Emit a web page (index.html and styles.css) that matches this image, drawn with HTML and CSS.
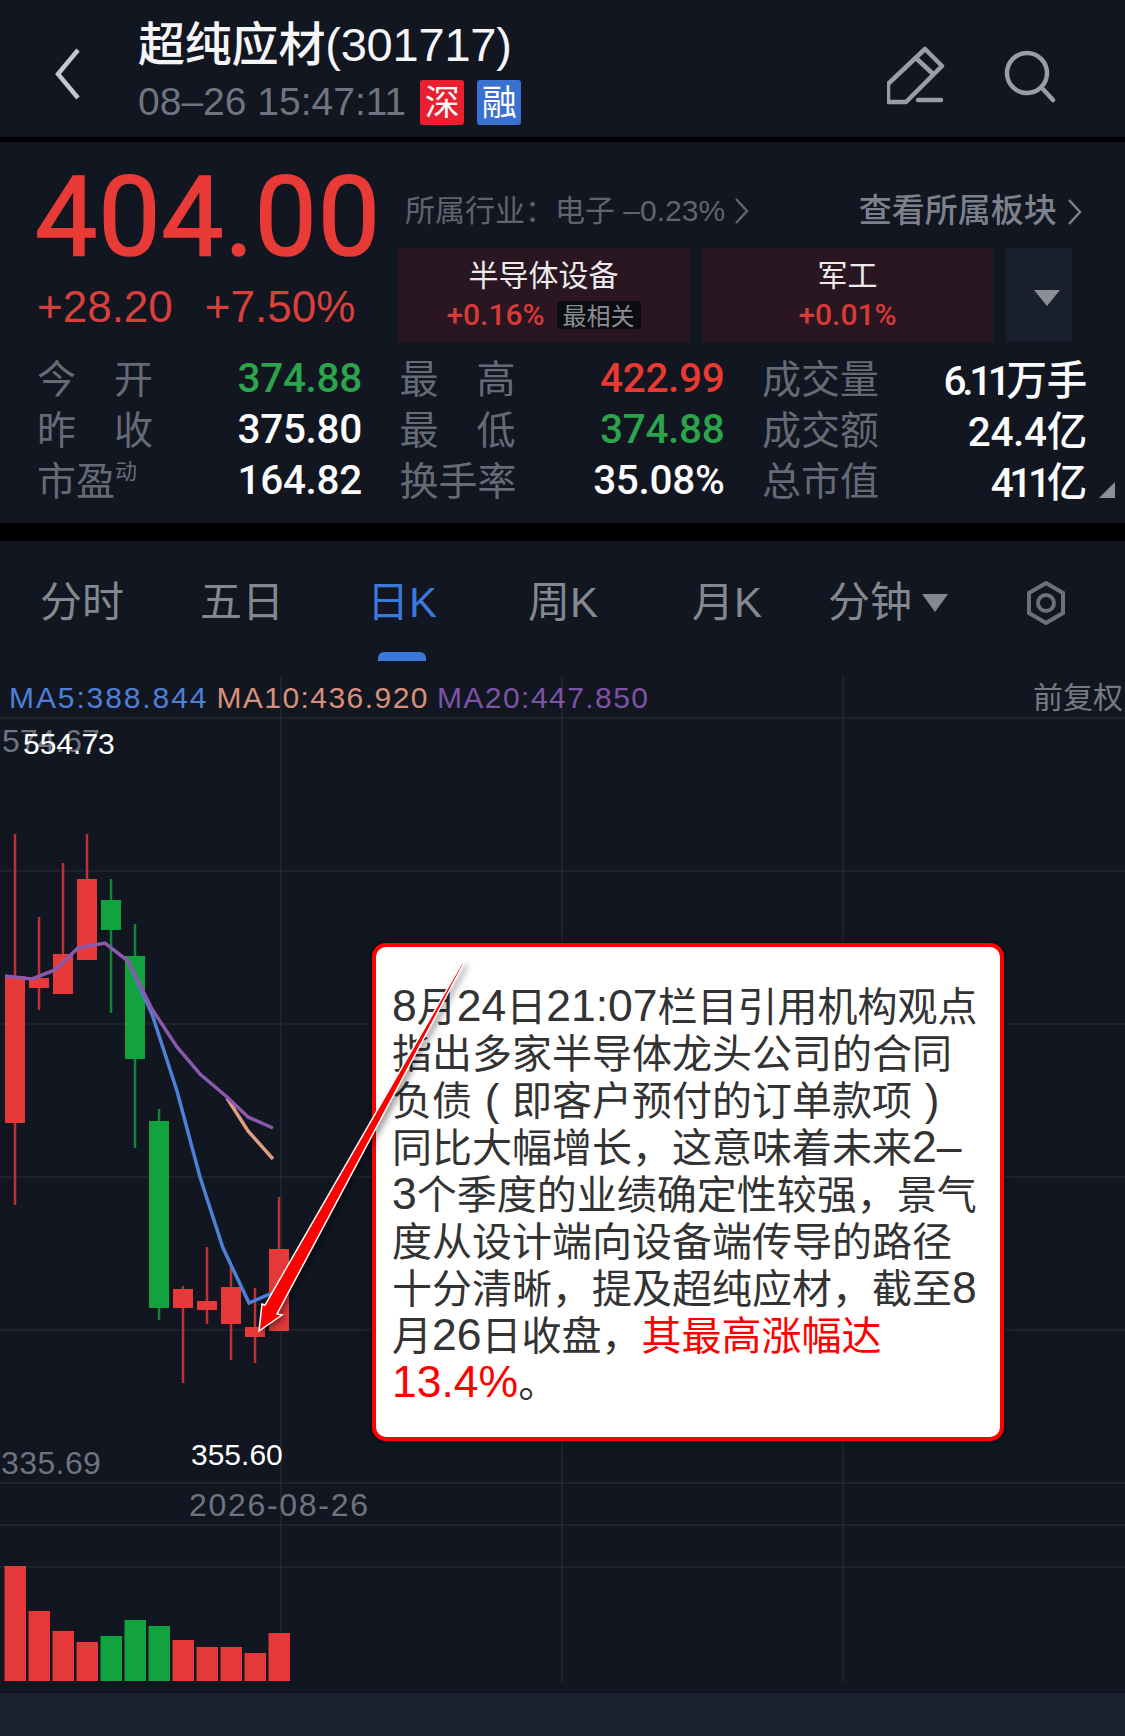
FILE: index.html
```html
<!DOCTYPE html>
<html lang="zh-CN">

<head>
    <meta charset="UTF-8">
    <title>超纯应材(301717)</title>
    <link rel="stylesheet" href="styles.css">
</head>

<body>
    <div class="page">

        <!-- top bar -->
        <header class="topbar">
            <svg class="back" width="30" height="54" viewBox="0 0 30 54">
                <path d="M25 3 L5 27 L25 51" />
            </svg>
            <div class="title-block">
                <div class="stock-name">超纯应材(301717)</div>
                <div class="stock-sub">
                    <span class="stock-time">08–26 15:47:11</span>
                    <span class="badge badge-red">深</span>
                    <span class="badge badge-blue">融</span>
                </div>
            </div>
            <svg class="top-icons" width="170" height="60" viewBox="0 0 170 60">
                <path d="M38 3 L55 20 L19 56 L1 56 L1 38 Z M30 13 L45 27" />
                <path d="M31 54 L54 54" />
                <circle cx="140" cy="27" r="20" />
                <path d="M155 42 L166 54" />
            </svg>
        </header>

        <!-- quote panel -->
        <section class="quote">
            <div class="quote-top">
                <div class="price-col">
                    <div class="price">404.00</div>
                    <div class="change">
                        <span>+28.20</span>
                        <span>+7.50%</span>
                    </div>
                </div>
                <div class="sector-col">
                    <div class="sector-line">
                        <span class="industry">所属行业：电子 –0.23%
                            <svg class="chev" width="16" height="28" viewBox="0 0 16 28"><path d="M3 2 L14 14 L3 26" /></svg>
                        </span>
                        <span class="see-all">查看所属板块
                            <svg class="chev" width="16" height="28" viewBox="0 0 16 28"><path d="M3 2 L14 14 L3 26" /></svg>
                        </span>
                    </div>
                    <div class="sector-cards">
                        <div class="sector-card">
                            <div class="sector-name">半导体设备</div>
                            <div class="sector-pct">+0.16%<span class="tag">最相关</span></div>
                        </div>
                        <div class="sector-card">
                            <div class="sector-name">军工</div>
                            <div class="sector-pct">+0.01%</div>
                        </div>
                        <div class="sector-more"><span class="tri-down"></span></div>
                    </div>
                </div>
            </div>

            <div class="stats">
                <div class="stat"><span class="label spread"><i>今</i><i>开</i></span><span class="val green">374.88</span></div>
                <div class="stat"><span class="label spread"><i>最</i><i>高</i></span><span class="val red">422.99</span></div>
                <div class="stat"><span class="label">成交量</span><span class="val"><span class="tight">6.11</span>万手</span></div>

                <div class="stat"><span class="label spread"><i>昨</i><i>收</i></span><span class="val">375.80</span></div>
                <div class="stat"><span class="label spread"><i>最</i><i>低</i></span><span class="val green">374.88</span></div>
                <div class="stat"><span class="label">成交额</span><span class="val">24.4亿</span></div>

                <div class="stat"><span class="label">市盈<sup>动</sup></span><span class="val">164.82</span></div>
                <div class="stat"><span class="label">换手率</span><span class="val">35.08%</span></div>
                <div class="stat"><span class="label">总市值</span><span class="val"><span class="tight">411</span>亿</span></div>
            </div>
            <span class="corner"></span>
        </section>

        <!-- period tabs -->
        <nav class="tabs">
            <span class="tab">分时</span>
            <span class="tab">五日</span>
            <span class="tab active">日K</span>
            <span class="tab">周K</span>
            <span class="tab">月K</span>
            <span class="tab">分钟<span class="tab-caret"></span></span>
            <svg class="tab-gear" width="40" height="44" viewBox="0 0 40 44">
                <path d="M20 2 L37 12 L37 32 L20 42 L3 32 L3 12 Z" />
                <circle cx="20" cy="22" r="8" />
            </svg>
        </nav>

        <!-- k line chart -->
        <section class="chart">
            <svg class="chart-svg" id="chart" width="1125" height="1016" viewBox="0 677 1125 1016"></svg>

            <div class="ma-row">
                <span class="ma5">MA5:388.844</span>
                <span class="ma10">MA10:436.920</span>
                <span class="ma20">MA20:447.850</span>
                <span class="adjust">前复权</span>
            </div>

            <div class="callout">
                <span class="num">8</span>月<span class="num">24</span>日<span class="num">21:07</span>栏目引用机构观点<br>
                指出多家半导体龙头公司的合同<br>
                负债<span class="paren">(</span>即客户预付的订单款项<span class="paren">)</span><br>
                同比大幅增长，这意味着未来<span class="num">2–</span><br>
                <span class="num">3</span>个季度的业绩确定性较强，景气<br>
                度从设计端向设备端传导的路径<br>
                十分清晰，提及超纯应材，截至<span class="num">8</span><br>
                月<span class="num">26</span>日收盘，<span class="hl">其最高涨幅达<br><span class="num">13.4%</span></span>。
            </div>

            <svg class="arrow" width="480" height="400" viewBox="0 0 480 400">
                <polygon points="464,0 277,351 282,352 259,368 262,341 265,342 462,0" />
            </svg>
        </section>

        <div class="bottom-band"></div>
    </div>

    <script>
        const svg = document.getElementById("chart");

        // x of a candle from its index
        const cx = i => 15 + i * 24;

        // [color, bodyTop, bodyBottom, wickTop, wickBottom, volumeTop]
        const candles = [
            ["r", 976, 1123, 834, 1205, 1566],
            ["r", 978, 988, 917, 1010, 1611],
            ["r", 954, 994, 863, 954, 1631],
            ["r", 879, 960, 834, 879, 1642],
            ["g", 900, 930, 879, 1013, 1636],
            ["g", 956, 1059, 924, 1148, 1620],
            ["g", 1121, 1308, 1109, 1320, 1626],
            ["r", 1289, 1308, 1286, 1383, 1640],
            ["r", 1301, 1310, 1247, 1324, 1647],
            ["r", 1287, 1324, 1267, 1360, 1647],
            ["r", 1327, 1337, 1288, 1363, 1653],
            ["r", 1249, 1331, 1197, 1249, 1633]
        ];

        const lines = {
            ma10: "227,1098 248,1131 273,1159",
            ma5: "128,961 152,1014 177,1091 200,1177 223,1248 249,1303 272,1293",
            ma20: "5,976 32,979 55,970 78,948 105,943 128,961 152,1009 177,1047 200,1074 227,1097 248,1117 273,1128"
        };

        let out = "";

        [718, 871, 1024, 1177, 1330, 1483, 1525, 1567].forEach(y => {
            out += `<line class="grid" x1="0" x2="1125" y1="${y}" y2="${y}" />`;
        });
        [281, 562, 843].forEach(x => {
            out += `<line class="grid" x1="${x}" x2="${x}" y1="677" y2="1682" />`;
        });

        candles.forEach((c, i) => {
            const cls = c[0] === "r" ? "up" : "down";
            const x = cx(i);
            out += `<rect class="${cls} wick" x="${x - 1.25}" y="${c[3]}" width="2.5" height="${c[4] - c[3]}" />`;
            out += `<rect class="${cls}" x="${x - 10}" y="${c[1]}" width="20" height="${c[2] - c[1]}" />`;
            out += `<rect class="${cls}" x="${x - 10.5}" y="${c[5]}" width="21.5" height="${1681 - c[5]}" />`;
        });

        Object.keys(lines).forEach(k => {
            out += `<polyline class="line-${k}" points="${lines[k]}" />`;
        });

        out += `<text class="lbl-gray" x="2" y="752">574.67</text>`;
        out += `<text class="lbl-white" x="23" y="754">554.73</text>`;
        out += `<text class="lbl-white" x="191" y="1465">355.60</text>`;
        out += `<text class="lbl-gray lbl-low" x="1" y="1474">335.69</text>`;
        out += `<text class="lbl-gray lbl-date" x="189" y="1516">2026-08-26</text>`;

        svg.innerHTML = out;
    </script>
</body>

</html>
```

FILE: styles.css
```css
* {
    box-sizing: border-box;
}

html,
body {
    margin: 0;
    padding: 0;
    background: #000;
}

body {
    font-family: "Liberation Sans", "Noto Sans CJK SC", sans-serif;
}

.page {
    width: 1125px;
    height: 1736px;
    display: flex;
    flex-direction: column;
    overflow: hidden;
    background: #000;
}

/* top bar */
.topbar {
    height: 137px;
    background: #111621;
    display: flex;
    align-items: flex-start;
    position: relative;
    padding-left: 53px;
    margin-bottom: 5px;
}

.back {
    margin-top: 47px;
    fill: none;
    stroke: #c4c7ce;
    stroke-width: 4.5;
}

.title-block {
    margin-left: 55px;
    padding-top: 15px;
}

.stock-name {
    color: #f5f5f6;
    font-size: 47px;
    line-height: 60px;
    font-weight: 500;
    letter-spacing: -0.2px;
    white-space: nowrap;
}

.stock-sub {
    display: flex;
    align-items: center;
    margin-top: 2px;
    height: 50px;
}

.stock-time {
    color: #6f7480;
    font-size: 39px;
    margin-right: 14px;
    white-space: nowrap;
}

.badge {
    width: 44px;
    height: 45px;
    color: #fff;
    font-size: 35px;
    line-height: 45px;
    text-align: center;
    border-radius: 3px;
    margin-right: 13px;
    margin-top: 1px;
}

.badge-red {
    background: #e9202f;
}

.badge-blue {
    background: #3a70cf;
}

.top-icons {
    margin-left: auto;
    margin-right: 68px;
    margin-top: 46px;
    fill: none;
    stroke: #9a9da8;
    stroke-width: 4.5;
    stroke-linecap: round;
    stroke-linejoin: round;
}

/* quote panel */
.quote {
    height: 381px;
    background: #111621;
    position: relative;
    margin-bottom: 18px;
    padding-top: 20px;
}

.quote-top {
    display: flex;
    height: 190px;
}

.price-col {
    width: 398px;
    padding-left: 35px;
}

.price {
    color: #e83a36;
    font-family: Roboto, "Liberation Sans", sans-serif;
    font-size: 111px;
    line-height: 110px;
    font-weight: 400;
    letter-spacing: 0.8px;
    -webkit-text-stroke: 1.5px #e83a36;
}

.change {
    color: #d9403c;
    font-size: 44px;
    line-height: 48px;
    margin-top: 11px;
    padding-left: 2px;
    display: flex;
    gap: 32px;
}

.sector-col {
    width: 675px;
}

.sector-line {
    display: flex;
    justify-content: space-between;
    height: 50px;
    align-items: center;
    padding-left: 7px;
    margin-top: 21px;
    color: #60646f;
    font-size: 30px;
    white-space: nowrap;
}

.see-all {
    color: #7d818c;
    font-size: 33px;
    font-weight: 500;
    margin-right: -9px;
}

.chev {
    fill: none;
    stroke: currentColor;
    stroke-width: 2.5;
    vertical-align: -4px;
}

.sector-cards {
    display: flex;
    gap: 13px;
    margin-top: 15px;
    height: 94px;
}

.sector-card {
    width: 291px;
    background: #291620;
    text-align: center;
}

.sector-name {
    color: #eceaea;
    font-size: 30px;
    line-height: 36px;
    margin-top: 10px;
}

.sector-pct {
    color: #d83a38;
    font-family: Roboto, sans-serif;
    font-weight: 500;
    font-size: 30px;
    line-height: 30px;
    margin-top: 6px;
    display: flex;
    justify-content: center;
    align-items: center;
}

.tag {
    display: block;
    background: #0a0c10;
    color: #8a8c93;
    font-family: "Noto Sans CJK SC", sans-serif;
    font-weight: 400;
    font-size: 24px;
    line-height: 28px;
    padding: 0 6px;
    border-radius: 4px;
    margin-left: 12px;
}

.sector-more {
    width: 66px;
    background: #1a202b;
    display: flex;
    justify-content: center;
    padding-top: 42px;
    padding-left: 16px;
}

.tri-down {
    width: 0;
    height: 0;
    border-left: 13px solid transparent;
    border-right: 13px solid transparent;
    border-top: 16px solid #8b8e99;
}

.stats {
    display: grid;
    grid-template-columns: repeat(3, 325px);
    grid-auto-rows: 51px;
    column-gap: 37.5px;
    padding-left: 37px;
}

.stat {
    display: flex;
    justify-content: space-between;
    align-items: center;
}

.label {
    color: #666a76;
    font-size: 39px;
    width: 116px;
    margin-bottom: 4px;
    white-space: nowrap;
}

.label i {
    font-style: normal;
}

.spread {
    display: flex;
    justify-content: space-between;
}

.label sup {
    font-size: 22px;
    line-height: 0;
    vertical-align: 16px;
}

.val {
    color: #fbfbfb;
    font-family: Roboto, "Noto Sans CJK SC", sans-serif;
    font-size: 40.5px;
    font-weight: 500;
    letter-spacing: -0.3px;
}

.tight {
    letter-spacing: -4.3px;
}

.green {
    color: #2ba44c;
}

.red {
    color: #e83a30;
}

.corner {
    position: absolute;
    right: 10px;
    bottom: 25px;
    width: 0;
    height: 0;
    border-left: 16px solid transparent;
    border-bottom: 16px solid #8d909b;
}

/* period tabs */
.tabs {
    height: 136px;
    background: #111621;
    position: relative;
    display: grid;
    grid-template-columns: 160px 167px 161px 164px 136px 198px 40px;
    padding-left: 40px;
    padding-top: 36px;
}

.tab {
    color: #85888f;
    font-size: 42px;
    line-height: 52px;
    white-space: nowrap;
}

.tab.active {
    color: #3b78dc;
    position: relative;
}

.tab.active::after {
    content: "";
    position: absolute;
    left: 11px;
    top: 75px;
    width: 48px;
    height: 9px;
    background: #3b78dc;
    border-radius: 6px 6px 0 0;
}

.tab-caret {
    display: inline-block;
    width: 0;
    height: 0;
    margin-left: 10px;
    vertical-align: 5px;
    border-left: 13px solid transparent;
    border-right: 13px solid transparent;
    border-top: 18px solid #85888f;
}

.tab-gear {
    margin-top: 4px;
    fill: none;
    stroke: #6d707b;
    stroke-width: 4;
}

/* chart */
.chart {
    height: 1016px;
    background: #111621;
    position: relative;
}

.chart-svg {
    display: block;
}

.grid {
    stroke: #2a2e39;
    stroke-width: 1;
}

.up {
    fill: #e63a3a;
}

.down {
    fill: #12a33e;
}

.wick {
    opacity: 0.8;
}

.line-ma5,
.line-ma10,
.line-ma20 {
    fill: none;
    stroke-width: 3.5;
}

.line-ma5 {
    stroke: #4f80d8;
}

.line-ma10 {
    stroke: #dfa082;
}

.line-ma20 {
    stroke: #8a58ad;
}

.lbl-gray,
.lbl-white {
    font-size: 30px;
    font-family: "Liberation Sans", sans-serif;
}

.lbl-gray {
    font-size: 32px;
    fill: #6f7480;
}

.lbl-white {
    fill: #fff;
}

.lbl-low {
    letter-spacing: 0.4px;
}

.lbl-date {
    letter-spacing: 1.7px;
}

.ma-row {
    position: absolute;
    left: 9px;
    top: 3px;
    right: 2px;
    display: flex;
    gap: 8px;
    font-size: 30px;
    line-height: 36px;
    letter-spacing: 1.45px;
}

.ma5 {
    color: #4f80d8;
    letter-spacing: 1.9px;
}

.ma10 {
    color: #d9907a;
}

.ma20 {
    color: #7d53a6;
}

.adjust {
    margin-left: auto;
    color: #777a84;
    letter-spacing: 0;
    white-space: nowrap;
}

.callout {
    position: absolute;
    left: 372px;
    top: 266px;
    width: 632px;
    height: 498px;
    background: #fff;
    border: 4px solid #f00;
    border-radius: 14px;
    box-shadow: 0 0 6px rgba(0, 0, 0, 0.6);
    padding: 37px 0 0 16px;
    color: #333;
    font-size: 40px;
    line-height: 47px;
    white-space: nowrap;
}

.num {
    font-size: 44.5px;
    line-height: 0;
}

.paren {
    display: inline-block;
    width: 40px;
    text-align: center;
    font-size: 44px;
    line-height: 0;
}

.hl {
    color: #f00;
}

.arrow {
    position: absolute;
    left: 0;
    top: 286px;
    fill: #f00;
    stroke: #fff;
    stroke-width: 1.5;
    overflow: visible;
    filter: drop-shadow(3px 3px 3px rgba(0, 0, 0, 0.4));
}

.bottom-band {
    height: 43px;
    background: #1a2130;
}
```
